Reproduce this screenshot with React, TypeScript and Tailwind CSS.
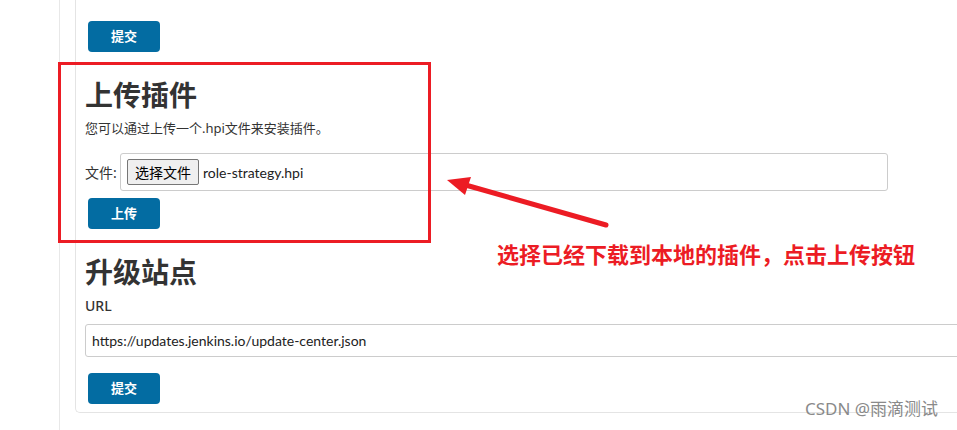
import React from 'react'

const font = { fontFamily: '"Noto Sans", "Noto Sans CJK SC", sans-serif' }
const latin = { fontFamily: 'Lato, "Noto Sans CJK SC", sans-serif' }

function BlueButton({ label }: { label: string }): JSX.Element {
  return (
    <button className="ml-[3px] h-[31px] w-[72px] rounded-[4px] bg-[#036ca2] text-[13px] font-bold leading-none text-white">
      {label}
    </button>
  )
}

export default function App(): JSX.Element {
  return (
    <div
      className="relative h-[430px] w-[957px] overflow-hidden bg-white text-[#333]"
      style={font}
    >
      <div className="ml-[59px] h-full border-l border-[#e8e8e8] pl-[15px]">
        <div className="w-[1000px] rounded-bl-[5px] border-b border-l border-[#e4e4e4] pb-2 pl-[9px] pt-[21px]">
          <BlueButton label="提交" />

          {/* upload plugin */}
          <h2 className="mt-[25px] text-[28px] font-bold leading-[36px]">上传插件</h2>
          <p className="mt-[5px] text-[13px] leading-[20px]">
            您可以通过上传一个.hpi文件来安装插件。
          </p>
          <div className="mt-[15px] flex items-center">
            <span className="w-[35px] text-[14px]">文件:</span>
            <div className="flex h-[38px] w-[768px] items-center rounded-[3px] border border-[#ccc] pl-[6px]">
              <span className="flex h-[26px] w-[72px] items-center justify-center rounded-[2px] border border-[#767676] bg-[#efefef] text-[14px] text-black">
                选择文件
              </span>
              <span className="ml-[4px] text-[14px] text-[#222]" style={latin}>
                role-strategy.hpi
              </span>
            </div>
          </div>
          <div className="mt-[7px]">
            <BlueButton label="上传" />
          </div>

          {/* update site */}
          <h2 className="mt-[25px] text-[28px] font-bold leading-[36px]">升级站点</h2>
          <div className="mt-[6px] text-[14px] font-medium leading-[20px]">URL</div>
          <div
            className="mt-2 flex h-[33px] w-[900px] items-center rounded-[3px] border border-[#ccc] pl-[6px] text-[14px] text-[#222]"
            style={latin}
          >
            https://updates.jenkins.io/update-center.json
          </div>
          <div className="mt-4">
            <BlueButton label="提交" />
          </div>
        </div>
      </div>

      {/* annotations */}
      <div className="absolute left-[58px] top-[62px] h-[181px] w-[373px] border-[3px] border-[#ec1c24]" />
      <svg className="absolute left-0 top-0" width="957" height="430">
        <line x1="606" y1="225" x2="462" y2="184" stroke="#ec1c24" strokeWidth="5" strokeLinecap="round" />
        <polygon points="447,180 471,177 465,195" fill="#ec1c24" />
      </svg>
      <div className="absolute left-[497px] top-[239px] text-[22px] font-bold leading-[30px] text-[#ec1c24]">
        选择已经下载到本地的插件，点击上传按钮
      </div>
      <div className="absolute left-[805px] top-[398px] text-[17px] leading-[22px] text-[#8a8a8a]">
        CSDN @雨滴测试
      </div>
    </div>
  )
}
